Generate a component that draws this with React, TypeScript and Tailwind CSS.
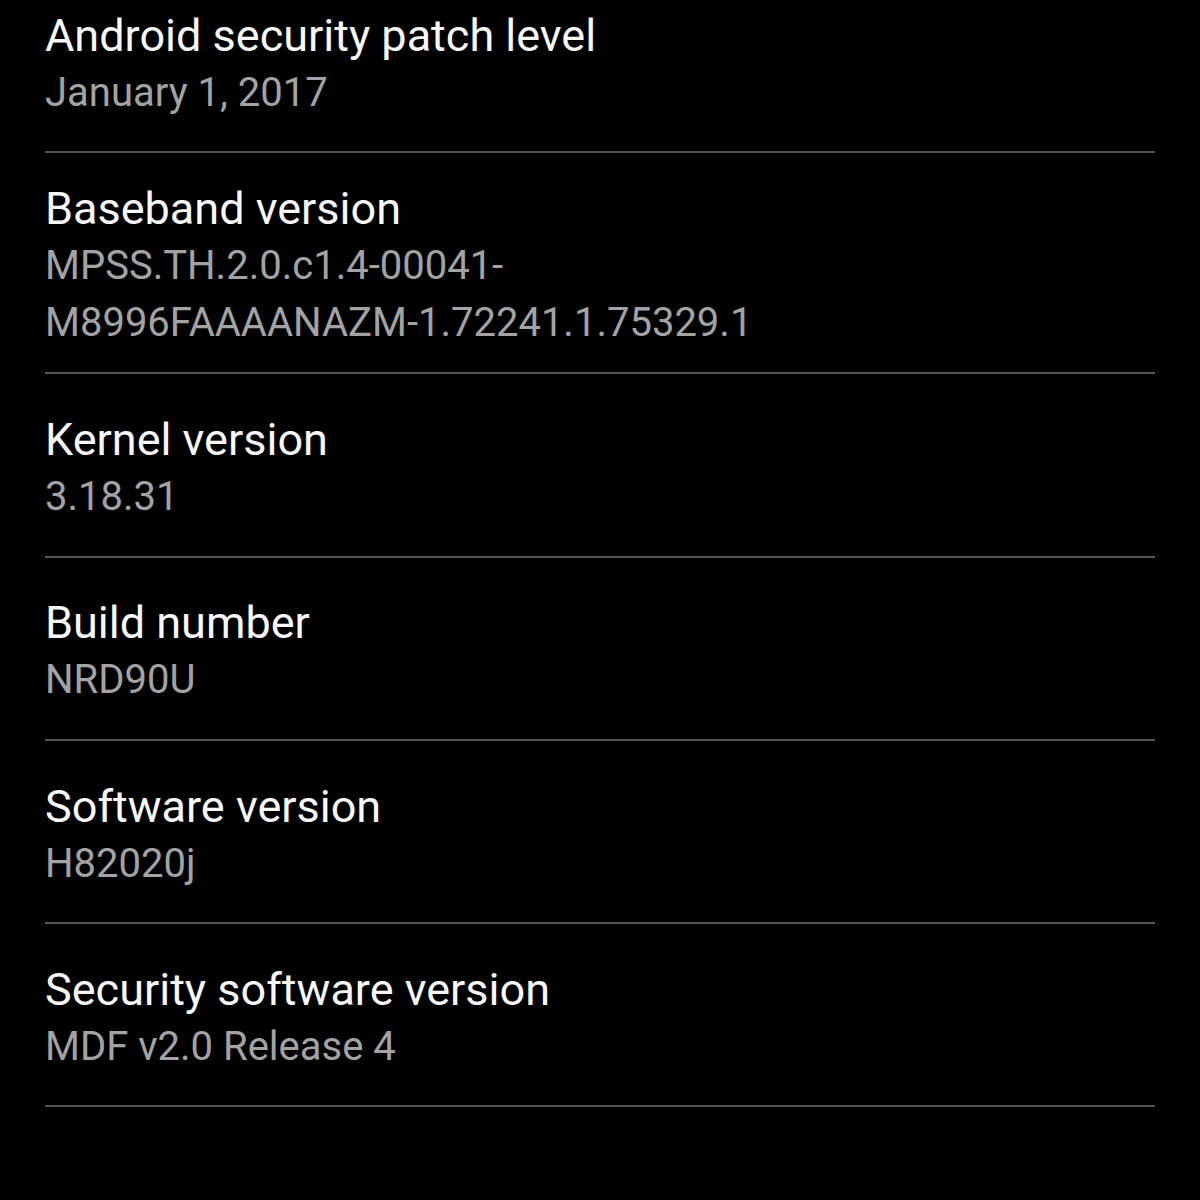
import React from "react";

const items: { title: string; lines: string[] }[] = [
  { title: "Android security patch level", lines: ["January 1, 2017"] },
  {
    title: "Baseband version",
    lines: ["MPSS.TH.2.0.c1.4-00041-", "M8996FAAAANAZM-1.72241.1.75329.1"],
  },
  { title: "Kernel version", lines: ["3.18.31"] },
  { title: "Build number", lines: ["NRD90U"] },
  { title: "Software version", lines: ["H82020j"] },
  { title: "Security software version", lines: ["MDF v2.0 Release 4"] },
];

export default function App() {
  return (
    <main className="w-[1200px] h-[1200px] overflow-hidden bg-black font-['Roboto',sans-serif]">
      <div className="ml-[45px] w-[1110px] -mt-[30px]">
        {items.map((item) => (
          <div key={item.title} className="border-b-2 border-[#555555]">
            <div className="min-h-[181.3px] flex flex-col justify-center pt-[28px] pb-[21px]">
              <div className="text-[45px] leading-[56px] text-[#f7f7f7]">
                {item.title}
              </div>
              {item.lines.map((line) => (
                <div
                  key={line}
                  className="text-[40px] leading-[57px] text-[#a3a3a3]"
                >
                  {line}
                </div>
              ))}
            </div>
          </div>
        ))}
      </div>
    </main>
  );
}
